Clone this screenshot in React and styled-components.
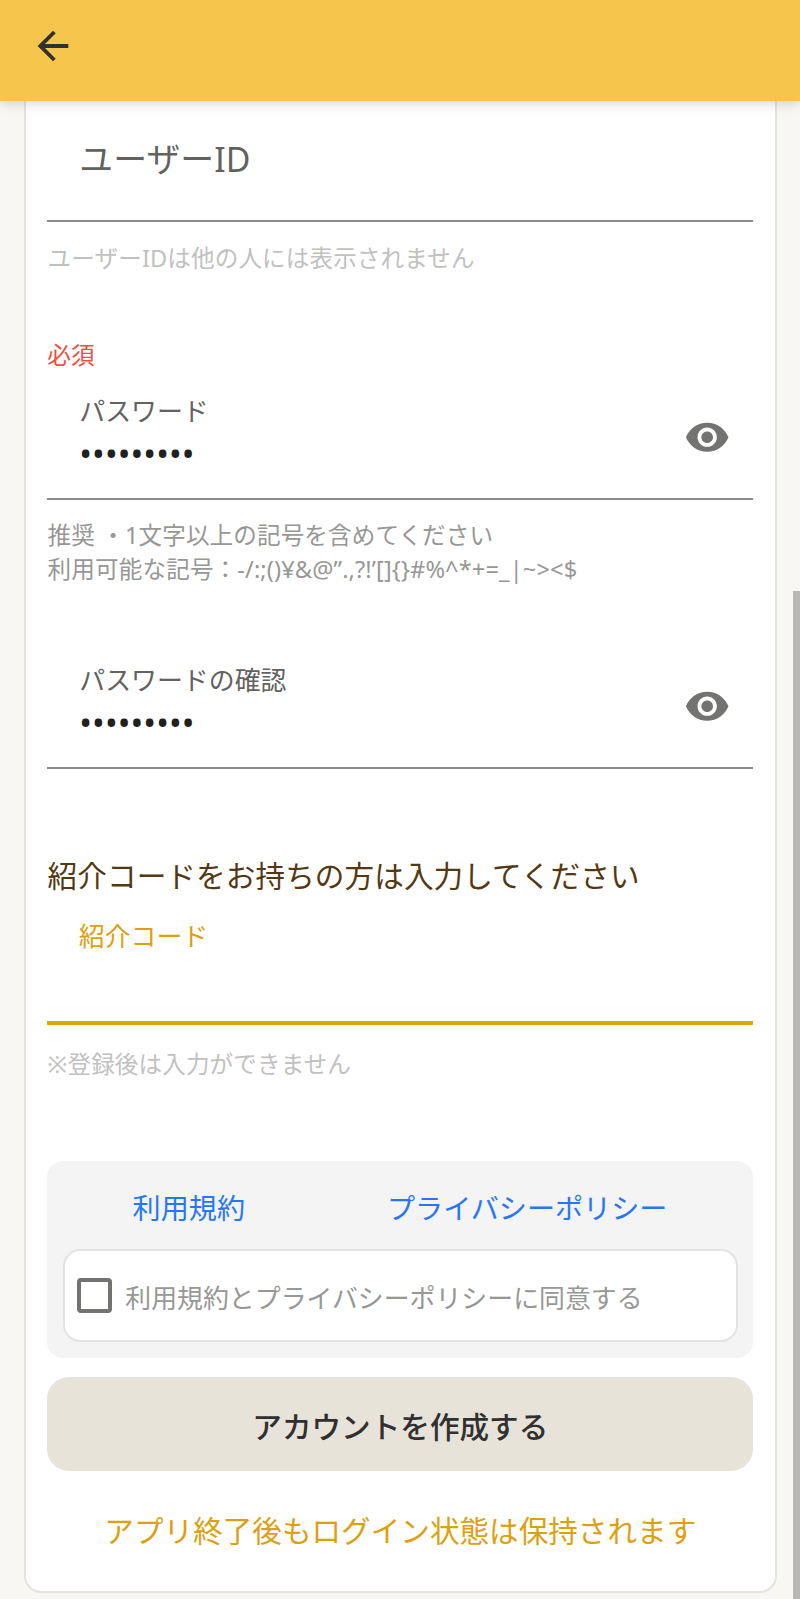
import React from 'react';
import styled, { createGlobalStyle } from 'styled-components';

const Global = createGlobalStyle`
  *, *::before, *::after { box-sizing: border-box; }
  body {
    margin: 0;
    background: #f8f7f2;
    font-family: "Noto Sans", "Noto Sans CJK JP", sans-serif;
    overflow: hidden;
  }
`;

const Screen = styled.div`
  display: flex;
  flex-direction: column;
  height: 1599px;
  background: #f8f7f2;
`;

const AppBar = styled.header`
  position: relative;
  z-index: 1;
  flex: none;
  display: flex;
  align-items: center;
  height: 101px;
  padding: 0 0 9px 29.5px;
  background: #f6c54c;
  box-shadow: 0 2px 12px rgba(0, 0, 0, 0.17);
`;

const BackButton = styled.button`
  display: flex;
  padding: 0;
  border: 0;
  background: none;
  color: #303030;
`;

const Body = styled.div`
  flex: 1;
  display: flex;
  justify-content: space-between;
  padding-left: 24px;
`;

const Card = styled.main`
  display: flex;
  flex-direction: column;
  width: 753px;
  height: 1491.5px;
  padding: 0 21.7px 0 21.3px;
  border: 2px solid #e3e3e3;
  border-top: 0;
  border-radius: 0 0 17px 17px;
  background: #fff;
`;

const ScrollTrack = styled.div`
  width: 7px;
  padding-top: 490px;
`;

const ScrollThumb = styled.div`
  height: 100%;
  background: #b8b8b4;
`;

const Line = styled.p`
  margin: 0;
  white-space: pre;
  font-size: ${(p) => p.$size}px;
  line-height: ${(p) => p.$lh}px;
  letter-spacing: ${(p) => p.$ls || 0}px;
  color: ${(p) => p.$color};
`;

const Field = styled.div`
  display: flex;
  align-items: flex-start;
  justify-content: space-between;
  height: ${(p) => p.$h}px;
  padding: 0 23.3px 0 ${(p) => p.$left || 32}px;
  border-bottom: ${(p) => (p.$focused ? '4px solid #dfa416' : '2px solid #8b8b89')};
`;

const FieldText = styled.div`
  padding-top: ${(p) => p.$top || 0}px;
`;

const EyeButton = styled.button`
  display: flex;
  margin-top: 21px;
  padding: 0;
  border: 0;
  background: none;
  color: #737371;
`;

const Helper = styled.div`
  padding: ${(p) => p.$top}px 0 0 0.3px;
  height: ${(p) => p.$h}px;
`;

const Required = styled(Line)`
  margin-bottom: 20px;
`;

const Terms = styled.section`
  flex: none;
  height: 197px;
  padding: 16px 15.5px;
  border-radius: 16px;
  background: #f4f4f4;
`;

const Links = styled.div`
  display: flex;
  height: 72px;
  padding: 10px 0 0 69.8px;
  gap: 142px;
`;

const Agree = styled.label`
  display: flex;
  align-items: center;
  height: 93px;
  padding: 0 12px;
  border: 2px solid #e3e3e3;
  border-radius: 17px;
  background: #fff;
`;

const Box = styled.span`
  width: 35px;
  height: 35px;
  margin-right: 13.5px;
  border: 4px solid #737371;
  border-radius: 4px;
`;

const AgreeText = styled(Line)`
  padding-top: 4px;
`;

const Submit = styled.button`
  flex: none;
  height: 93.5px;
  margin: 19px 0 0;
  padding: 6px 0 0;
  border: 0;
  border-radius: 22px;
  background: #e8e3d9;
  color: #303030;
  font: 500 29.6px/87px "Noto Sans", "Noto Sans CJK JP", sans-serif;
`;

const Note = styled(Line)`
  margin-top: 38px;
  text-align: center;
`;

const Eye = () => (
  <EyeButton aria-label="表示">
    <svg width="46.4" height="46.4" viewBox="0 0 24 24" fill="currentColor">
      <path d="M12 4.5C7 4.5 2.73 7.61 1 12c1.73 4.39 6 7.5 11 7.5s9.27-3.11 11-7.5c-1.73-4.39-6-7.5-11-7.5zM12 17c-2.76 0-5-2.24-5-5s2.24-5 5-5 5 2.24 5 5-2.24 5-5 5zm0-8c-1.66 0-3 1.34-3 3s1.34 3 3 3 3-1.34 3-3-1.34-3-3-3z" />
    </svg>
  </EyeButton>
);

const Password = ({ label, height }) => (
  <Field $h={height}>
    <FieldText>
      <Line $size={25.9} $lh={36} $color="#62625f">{label}</Line>
      <Line $size={33.8} $lh={49} $ls={0.1} $color="#20201e">•••••••••</Line>
    </FieldText>
    <Eye />
  </Field>
);

export default function App() {
  return (
    <Screen>
      <Global />
      <AppBar>
        <BackButton aria-label="戻る">
          <svg width="46" height="46" viewBox="0 0 24 24" fill="currentColor">
            <path d="M7.825 13l5.6 5.6L12 20l-8-8 8-8 1.425 1.4L7.825 11H20v2z" />
          </svg>
        </BackButton>
      </AppBar>
      <Body>
        <Card>
          <Field $h={121}>
            <FieldText $top={34.4}>
              <Line $size={33.8} $lh={48} $ls={0.1} $color="#62625f">ユーザーID</Line>
            </FieldText>
          </Field>
          <Helper $top={18.5} $h={116}>
            <Line $size={23.6} $lh={34} $ls={0.1} $color="#c1c1bf">ユーザーIDは他の人には表示されません</Line>
          </Helper>
          <Required $size={23.6} $lh={35} $color="#f24e3d">必須</Required>
          <Password label="パスワード" height={107} />
          <Helper $top={18} $h={162}>
            <Line $size={23.6} $lh={34} $ls={0.1} $color="#979795">推奨 ・1文字以上の記号を含めてください</Line>
            <Line $size={23.6} $lh={35} $ls={0.12} $color="#979795">利用可能な記号：-/:;()¥&amp;@”.,?!’[]{'{}'}#%^*+=_|~&gt;&lt;$</Line>
          </Helper>
          <Password label="パスワードの確認" height={107} />
          <Helper $top={85} $h={150}>
            <Line $size={29.6} $lh={44} $ls={0.1} $color="#543812">紹介コードをお持ちの方は入力してください</Line>
          </Helper>
          <Field $h={106} $focused $left={31.5}>
            <FieldText>
              <Line $size={25.9} $lh={35} $color="#dda010">紹介コード</Line>
            </FieldText>
          </Field>
          <Helper $top={22} $h={136}>
            <Line $size={23.6} $lh={34} $ls={0.1} $color="#c1c1bf">※登録後は入力ができません</Line>
          </Helper>
          <Terms>
            <Links>
              <Line $size={28.1} $lh={42} $color="#2876f8">利用規約</Line>
              <Line $size={28.1} $lh={42} $color="#2876f8">プライバシーポリシー</Line>
            </Links>
            <Agree>
              <Box />
              <AgreeText $size={25.9} $lh={38} $color="#979795">利用規約とプライバシーポリシーに同意する</AgreeText>
            </Agree>
          </Terms>
          <Submit>アカウントを作成する</Submit>
          <Note $size={29.6} $lh={44} $color="#dda010">アプリ終了後もログイン状態は保持されます</Note>
        </Card>
        <ScrollTrack><ScrollThumb /></ScrollTrack>
      </Body>
    </Screen>
  );
}
